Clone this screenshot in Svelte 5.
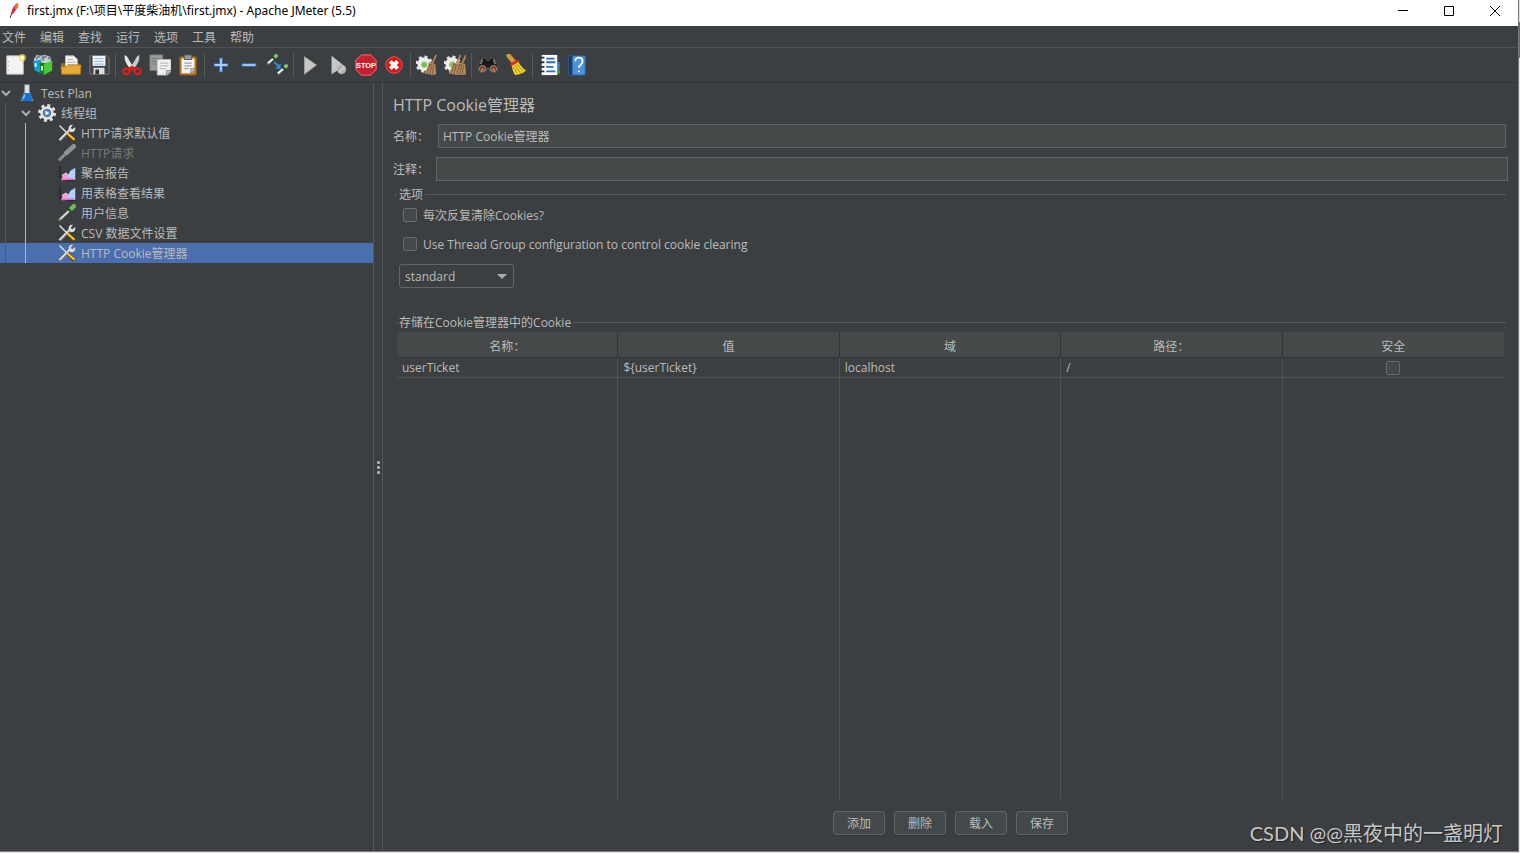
<script lang="ts">
    type TreeNode = {
        label: string;
        icon: string;
        depth: number;
        open?: boolean;
        disabled?: boolean;
    };

    type Cookie = {
        name: string;
        value: string;
        domain: string;
        path: string;
        secure: boolean;
    };

    const menus = ["文件", "编辑", "查找", "运行", "选项", "工具", "帮助"];

    // Toolbar buttons, one array per separated group.
    const toolbar = [
        [
            ["new", "新建"],
            ["templates", "模板"],
            ["open", "打开"],
            ["save", "保存"],
        ],
        [
            ["cut", "剪切"],
            ["copy", "复制"],
            ["paste", "粘贴"],
        ],
        [
            ["plus", "展开"],
            ["minus", "折叠"],
            ["toggle", "切换"],
        ],
        [
            ["start", "启动"],
            ["startNoTimers", "不停顿开始"],
            ["stop", "停止"],
            ["shutdown", "关闭"],
        ],
        [
            ["clear", "清除"],
            ["clearAll", "清除全部"],
        ],
        [
            ["search", "查找"],
            ["searchReset", "重置搜索"],
        ],
        [
            ["functions", "函数助手"],
            ["help", "帮助"],
        ],
    ];

    const nodes: TreeNode[] = [
        { label: "Test Plan", icon: "flask", depth: 0, open: true },
        { label: "线程组", icon: "gear", depth: 1, open: true },
        { label: "HTTP请求默认值", icon: "config", depth: 2 },
        { label: "HTTP请求", icon: "samplerOff", depth: 2, disabled: true },
        { label: "聚合报告", icon: "report", depth: 2 },
        { label: "用表格查看结果", icon: "report", depth: 2 },
        { label: "用户信息", icon: "sampler", depth: 2 },
        { label: "CSV 数据文件设置", icon: "config", depth: 2 },
        { label: "HTTP Cookie管理器", icon: "config", depth: 2 },
    ];

    const columns = ["名称：", "值", "域", "路径：", "安全"];

    let selected = $state(8);
    let name = $state("HTTP Cookie管理器");
    let comment = $state("");
    let clearEachIteration = $state(false);
    let useThreadGroup = $state(false);
    let policy = $state("standard");
    let cookies = $state<Cookie[]>([
        {
            name: "userTicket",
            value: "${userTicket}",
            domain: "localhost",
            path: "/",
            secure: false,
        },
    ]);

    function addCookie() {
        cookies.push({ name: "", value: "", domain: "", path: "", secure: false });
    }

    function deleteCookie() {
        cookies.pop();
    }
</script>

{#snippet broom(x: number)}
    <g transform="translate({x} 0)">
        <path d="M19 1 15 10" stroke="#b08055" stroke-width="2" />
        <path d="m11 9 7 2 1 11-4 1-9-2q4-5 5-12z" fill="#b58d63" />
        <path d="m12 12-3 9m5-8-2 9m4-8-1 8M11 11l6 2" stroke="#765334" />
    </g>
{/snippet}

{#snippet cog()}
    <circle cx="9" cy="11" r="8" stroke="#dedede" stroke-width="3" stroke-dasharray="3.2 3.083" />
    <circle cx="9" cy="11" r="5.500" fill="#c8d2c4" stroke="#ededed" stroke-width="4" />
    <circle cx="9" cy="12" r="3" fill="#72c845" />
{/snippet}

{#snippet pipette(x: number, y: number)}
    <g transform="translate({x} {y})">
        <path d="m1 10 6-6" stroke="#77786f" stroke-width="3" />
        <path d="m1 9 6-5" stroke="#f4f4ec" stroke-width="2" />
        <path d="m8 3 2-2" stroke="#7fc766" stroke-width="4" stroke-linecap="round" />
        <path d="m5 1 5 5" stroke="#234027" stroke-width="2" />
    </g>
{/snippet}

{#snippet icon(kind: string, size: number)}
    <svg width={size} height={size} viewBox="0 0 24 24" fill="none" aria-hidden="true">
        {#if kind === "new"}
            <path d="M3 2h18v20H3z" fill="#f3f3f3" stroke="#c9c9c9" />
            <path d="M5 8v1m0 3v1m0 4v1" stroke="#999" />
            <circle cx="20" cy="4" r="4" fill="#f5e04d" opacity=".7" />
            <circle cx="20" cy="4" r="2" fill="#fffbd0" />
        {:else if kind === "templates"}
            <path d="m2 6 3-5 4 1 5-1 3 1 3 1 1 7H3z" fill="#c7d0d3" />
            <path d="M5 6q0-4 4-3m3 4q0-4 4-4m-5 3 1-4m6 4 1-3" stroke="#73868c" stroke-width="2" />
            <path d="m1 8 9-2v15l-7-3z" fill="#169ed3" />
            <path d="m8 9 6 1v13l-5-2z" fill="#078a22" />
            <path d="m13 11 9-4v11l-9 5z" fill="#4acb35" />
            <path d="M4 10v4m7-1v5" stroke="#e7fbff" stroke-width="2" />
        {:else if kind === "open"}
            <path d="M1 10h20v12H2z" fill="#a06e12" />
            <path d="M6 2h9l4 4v10H6z" fill="#f5f5f5" stroke="#bbb" />
            <path d="M8 6h6m-6 3h9m-9 3h9" stroke="#aaa" />
            <path d="M1 14h6l2-2h14l-1 10H2z" fill="#e5ad36" stroke="#b47d16" />
        {:else if kind === "save"}
            <path d="M2 2h19l2 2v18H2z" fill="#444" stroke="#777" />
            <path d="M5 2h14v11H5z" fill="#edf4fa" />
            <path d="M7 5h10M7 8h10m-10 3h10" stroke="#87b2d6" />
            <path d="M6 15h12v7H6z" fill="#ddd" />
            <path d="M8 17h4v5H8z" fill="#333" />
        {:else if kind === "cut"}
            <path d="M4 1q3 1 5 6l5 8-3 2Q3 9 4 1z" fill="#e7e9e9" />
            <path d="M20 1q-3 1-5 6l-5 8 3 2q8-8 7-16z" fill="#c8cccc" />
            <path d="m12 14-4 4m4-4 4 4" stroke="#d31717" stroke-width="3" />
            <ellipse cx="6" cy="19" rx="3.500" ry="3" stroke="#e21b1b" stroke-width="2.500" />
            <ellipse cx="18" cy="19" rx="3.500" ry="3" stroke="#e21b1b" stroke-width="2.500" />
        {:else if kind === "copy"}
            <path d="M1 1h14v17H1z" fill="#9a9c9b" stroke="#777" />
            <path d="M3 5h10M3 8h10M3 11h7" stroke="#737674" />
            <path d="M9 6h15v13l-4 4H9z" fill="#f1f1ef" stroke="#b8b8b4" />
            <path d="M12 10h9m-9 3h9m-9 3h7" stroke="#aaa" />
            <path d="M24 18h-5v5z" fill="#ccc" stroke="#888" />
        {:else if kind === "paste"}
            <rect x="3" y="3" width="18" height="20" rx="1" fill="#bd7b22" stroke="#8c5712" />
            <path d="M5 5h14v13l-3 3H5z" fill="#f2f2f0" />
            <path d="M8 1h8v5H8z" fill="#999" stroke="#555" />
            <path d="M8 10h8m-8 3h8m-8 3h5" stroke="#888" />
            <path d="M20 16h-5v5z" fill="#ccc" stroke="#888" />
        {:else if kind === "plus"}
            <path d="M12 4v16M4 12h16" stroke="#3973b8" stroke-width="4" />
            <path d="M12 5v14M5 12h14" stroke="#a9ccf2" stroke-width="2" />
        {:else if kind === "minus"}
            <path d="M4 12h16" stroke="#3973b8" stroke-width="4" />
            <path d="M5 12h14" stroke="#a9ccf2" stroke-width="2" />
        {:else if kind === "toggle"}
            {@render pipette(1, 1)}
            {@render pipette(12, 12)}
            <path d="m9 9 6 5" stroke="#318ce7" stroke-width="2" />
            <path d="M16 10v6h-6z" fill="#318ce7" />
        {:else if kind === "start"}
            <path d="m6 3 13 9-13 10z" fill="#c7c7c7" stroke="#a2a2a2" />
        {:else if kind === "startNoTimers"}
            <path d="m5 2 14 11-14 9z" fill="#c7c7c7" />
            <circle cx="16" cy="17" r="5" fill="#b0b0b0" />
            <path d="m13 20 6-6" stroke="#d2d2d2" stroke-width="2" />
        {:else if kind === "stop"}
            <path d="M7 0h10l7 7v10l-7 7H7l-7-7V7z" fill="#c51f30" />
            <path d="M7 1h10l6 6v10l-6 6H7l-6-6V7z" stroke="#df7680" />
            <text x="12" y="15" text-anchor="middle" class="stop-text">STOP</text>
        {:else if kind === "shutdown"}
            <circle cx="12" cy="12" r="9" fill="#d81818" stroke="#ed5a50" />
            <path d="m8 8 8 8m0-8-8 8" stroke="#fff" stroke-width="4" />
        {:else if kind === "clear"}
            {@render cog()}
            {@render broom(3)}
        {:else if kind === "clearAll"}
            {@render cog()}
            {@render broom(-1)}
            {@render broom(5)}
        {:else if kind === "search"}
            <path d="m1 14 4-9 4-1 2 3h2l2-3 4 1 4 9-1 6h-7l-2-5h-2l-2 5H2z" fill="#191919" stroke="#555" />
            <path d="M6 6 4 11m14-5 2 5" stroke="#777" stroke-width="2" />
            <circle cx="6" cy="16" r="3.500" fill="#7b3d26" stroke="#999" />
            <circle cx="18" cy="16" r="3.500" fill="#7b3d26" stroke="#999" />
            <circle cx="6" cy="17" r="1.500" fill="#cd7244" />
            <circle cx="18" cy="17" r="1.500" fill="#cd7244" />
        {:else if kind === "searchReset"}
            <path d="m4 2 6 7" stroke="#d79a31" stroke-width="5" stroke-linecap="round" />
            <path d="m7 11 7-4q3 7 9 11-4 4-12 5Q8 19 7 11z" fill="#f1d12b" />
            <path d="m9 14 4 7m-2-9 6 9m-4-10 7 8" stroke="#b48a00" />
            <path d="m6 12 9-5" stroke="#d52a2a" stroke-width="3" />
        {:else if kind === "functions"}
            <path d="M18 9h6v7h-6z" fill="#2c71d2" />
            <path d="M18 16h6v6h-6z" fill="#29952e" />
            <path d="M4 1h17v22H4z" fill="#fff" />
            <path d="M2 4h5M2 9h5m-5 5h5m-5 5h5" stroke="#333" stroke-width="2" />
            <path d="M9 5h9M9 9h10M9 14h8m-8 5h10" stroke="#2b6ac1" stroke-width="2" />
        {:else if kind === "help"}
            <path d="M3 2h18v21H3z" fill="#4a91df" stroke="#2c5e9f" />
            <path d="M3 2h4v21H3z" fill="#183d69" />
            <path d="M10 8q0-4 4-4t4 4q0 2-2 4-2 1-2 3m0 3v2" stroke="#fff" stroke-width="2" />
        {:else if kind === "flask"}
            <path d="M9 1h6v9l5 12H4l5-12z" fill="#d9e5ef" stroke="#8b9aa8" />
            <path d="m8 12 8 0 4 9q-8 4-16 0z" fill="#1474d4" />
            <path d="m9 14-2 6" stroke="#84c5ff" stroke-width="2" />
        {:else if kind === "gear"}
            <circle cx="12" cy="12" r="10" stroke="#e2e2e2" stroke-width="4" stroke-dasharray="4 3.854" />
            <circle cx="12" cy="12" r="7" fill="#5f87be" stroke="#e5e5e5" stroke-width="4" />
            <circle cx="12" cy="12" r="5" stroke="#315485" />
            <path d="m10 9 5 3-5 3z" fill="#fff" />
        {:else if kind === "config"}
            <path d="m2 22 14-14" stroke="#85857e" stroke-width="4" />
            <path d="m2 21 14-14" stroke="#eee" stroke-width="2" />
            <path d="M20 1q-6-1-6 6l3 4q7 0 6-7l-4 3-2-2z" fill="#ddd" />
            <path d="m2 2 11 11" stroke="#ddd" stroke-width="2" />
            <path d="m13 13 9 9" stroke="#5b4300" stroke-width="5" />
            <path d="m13 13 9 8" stroke="#ffc52b" stroke-width="3" />
        {:else if kind === "samplerOff"}
            <path d="m1 22 13-13" stroke="#8c8c8c" stroke-width="4" />
            <path d="m11 12 10-9" stroke="#929292" stroke-width="6" stroke-linecap="round" />
        {:else if kind === "sampler"}
            <path d="m1 22 14-13" stroke="#77786f" stroke-width="4" />
            <path d="m3 20 12-11" stroke="#f0f0e8" stroke-width="2" />
            <path d="m17 7 4-4" stroke="#6cb85d" stroke-width="6" stroke-linecap="round" />
            <path d="m12 5 7 7" stroke="#27512a" stroke-width="3" />
        {:else if kind === "report"}
            <path d="M3 2v20h20M1 5h2M1 9h2M1 13h2M1 17h2" stroke="#222" />
            <path d="m5 21 1-6 5-3 4 4 3 5z" fill="#f29de0" />
            <path d="M14 18q-1-6 4-10l5-3v16h-7z" fill="#b2d2fa" />
            <path d="m4 21 17-1" stroke="#e36fd0" stroke-width="2" />
            <path d="m5 15 6-3 4 4" stroke="#fff" />
        {/if}
    </svg>
{/snippet}

<div class="desktop">
    <div class="window">
        <header class="titlebar">
            <svg class="feather" width="14" height="18" viewBox="0 0 14 18" aria-hidden="true">
                <path d="M11 1q2 1 1 4L7 12H5Q6 5 11 1z" fill="#cf3138" />
                <path d="M11 1q2 1 1 4L9 8V4z" fill="#ed7d31" />
                <path d="m6 11-2 5" stroke="#652276" fill="none" />
            </svg>
            <h1>first.jmx (F:\项目\平度柴油机\first.jmx) - Apache JMeter (5.5)</h1>
            <div class="window-controls">
                <button aria-label="最小化">
                    <svg width="12" height="12"><path d="M1 5.500h10" /></svg>
                </button>
                <button aria-label="最大化">
                    <svg width="12" height="12"><path d="M1.500 1.500h9v9h-9z" /></svg>
                </button>
                <button aria-label="关闭">
                    <svg width="12" height="12"><path d="m1 1 10 10m0-10L1 11" /></svg>
                </button>
            </div>
        </header>

        <nav class="menubar">
            {#each menus as menu}
                <button>{menu}</button>
            {/each}
        </nav>

        <div class="toolbar" role="toolbar">
            {#each toolbar as group, i}
                {#if i > 0}<span class="separator"></span>{/if}
                {#each group as [kind, label]}
                    <button aria-label={label} title={label}>{@render icon(kind, 22)}</button>
                {/each}
            {/each}
        </div>

        <div class="workspace">
            <aside class="tree" role="tree">
                {#each nodes as node, i}
                    <button
                        class="node"
                        class:selected={selected === i}
                        class:disabled={node.disabled}
                        role="treeitem"
                        aria-selected={selected === i}
                        onclick={() => (selected = i)}
                    >
                        {#each { length: node.depth } as _, level}
                            <span class="guide" class:active={level === 1}></span>
                        {/each}
                        <span class="chevron">
                            {#if node.open}
                                <svg width="11" height="8"><path d="m2 2 4 4 4-4" /></svg>
                            {/if}
                        </span>
                        {@render icon(node.icon, 18)}
                        <span class="node-label">{node.label}</span>
                    </button>
                {/each}
            </aside>

            <div class="splitter"><i></i><i></i><i></i></div>

            <main class="editor">
                <h2>HTTP Cookie管理器</h2>
                <div class="field name-field">
                    <label for="name">名称：</label>
                    <input id="name" type="text" bind:value={name} />
                </div>
                <div class="field">
                    <label for="comment">注释：</label>
                    <input id="comment" type="text" bind:value={comment} />
                </div>

                <fieldset class="options">
                    <legend>选项</legend>
                    <label class="check">
                        <input type="checkbox" bind:checked={clearEachIteration} />
                        <span>每次反复清除Cookies?</span>
                    </label>
                    <label class="check">
                        <input type="checkbox" bind:checked={useThreadGroup} />
                        <span>Use Thread Group configuration to control cookie clearing</span>
                    </label>
                    <div class="select">
                        <select aria-label="Cookie policy" bind:value={policy}>
                            <option>standard</option>
                            <option>netscape</option>
                            <option>ignoreCookies</option>
                        </select>
                    </div>
                </fieldset>

                <fieldset class="stored">
                    <legend>存储在Cookie管理器中的Cookie</legend>
                    <div class="table-wrap">
                        <table>
                            <thead>
                                <tr>
                                    {#each columns as column}
                                        <th>{column}</th>
                                    {/each}
                                </tr>
                            </thead>
                            <tbody>
                                {#each cookies as cookie}
                                    <tr class="row">
                                        <td>{cookie.name}</td>
                                        <td>{cookie.value}</td>
                                        <td>{cookie.domain}</td>
                                        <td>{cookie.path}</td>
                                        <td class="secure">
                                            <input type="checkbox" aria-label="安全" bind:checked={cookie.secure} />
                                        </td>
                                    </tr>
                                {/each}
                                <!-- Empty row keeps the column lines running to the bottom. -->
                                <tr>
                                    {#each columns as _}
                                        <td></td>
                                    {/each}
                                </tr>
                            </tbody>
                        </table>
                    </div>
                </fieldset>

                <div class="actions">
                    <button onclick={addCookie}>添加</button>
                    <button onclick={deleteCookie}>删除</button>
                    <button>载入</button>
                    <button>保存</button>
                </div>
            </main>
        </div>
    </div>
    <div class="watermark">CSDN @@黑夜中的一盏明灯</div>
</div>

<style>
    :global(body) {
        margin: 0;
        background: #3c3f41;
    }

    .desktop {
        position: relative;
        box-sizing: border-box;
        min-height: 100vh;
        padding: 0 1px 1px 0;
        display: flex;
        background: linear-gradient(#ddd 22px, #c8452b 22px 58px, #e4e4e8 58px);
        font: 12px/18px "Open Sans", "Noto Sans CJK SC", sans-serif;
        color: #bbb;
    }

    .desktop * {
        box-sizing: border-box;
    }

    .window {
        flex: 1;
        min-width: 0;
        display: flex;
        flex-direction: column;
        background: #3c3f41;
        border: solid #77797a;
        border-width: 0 1px 1px 0;
    }

    button,
    input,
    select {
        font: inherit;
        color: inherit;
        margin: 0;
    }

    button {
        padding: 0;
        border: 0;
        background: none;
    }

    svg {
        flex: none;
        display: block;
    }

    .titlebar {
        height: 26px;
        display: flex;
        align-items: center;
        padding-left: 6px;
        padding-bottom: 4px;
        background: #fff;
        color: #000;
    }

    .titlebar h1 {
        margin: 0 auto 0 7px;
        font: 12px/18px "Noto Sans", "Noto Sans CJK SC", sans-serif;
    }

    .window-controls {
        display: flex;
    }

    .window-controls button {
        width: 46px;
        height: 22px;
        display: flex;
        align-items: center;
        justify-content: center;
    }

    .window-controls path {
        stroke: #000;
        fill: none;
    }

    .menubar {
        height: 22px;
        display: flex;
        gap: 14px;
        padding-left: 2px;
        border-bottom: 1px solid #515151;
    }

    .menubar button {
        height: 21px;
        padding-top: 2px;
    }

    .toolbar {
        height: 35px;
        display: flex;
        align-items: center;
        padding-left: 1px;
        border-bottom: 1px solid #323435;
    }

    .toolbar button {
        width: 28px;
        height: 28px;
        display: flex;
        align-items: center;
        justify-content: center;
    }

    .separator {
        width: 1px;
        height: 25px;
        margin: 0 2px;
        background: #555859;
    }

    .stop-text {
        font: bold 8px "Liberation Sans", sans-serif;
        fill: #fff;
    }

    .workspace {
        flex: 1;
        display: flex;
    }

    .tree {
        width: 373px;
        flex: none;
    }

    .node {
        width: 100%;
        height: 20px;
        display: flex;
        align-items: center;
        text-align: left;
        white-space: nowrap;
    }

    .node.selected {
        background: #4b6eaf;
    }

    .node.disabled {
        color: #777;
    }

    .guide {
        width: 15px;
        height: 20px;
        margin-left: 5px;
        border-left: 1px solid #555859;
    }

    .guide.active {
        border-color: #8ac4ec;
    }

    .chevron {
        width: 18px;
    }

    .chevron path {
        fill: none;
        stroke: #adadad;
        stroke-width: 2;
    }

    .node-label {
        margin-left: 5px;
        padding-top: 2px;
    }

    .splitter {
        width: 10px;
        flex: none;
        display: flex;
        flex-direction: column;
        align-items: center;
        justify-content: center;
        gap: 2px;
        border: solid #555859;
        border-width: 0 1px;
    }

    .splitter i {
        width: 3px;
        height: 3px;
        border-radius: 1px;
        background: #adadad;
    }

    .editor {
        flex: 1;
        min-width: 0;
        display: flex;
        flex-direction: column;
        padding: 10px 10px 16px;
    }

    h2 {
        margin: 0 0 7px;
        font-size: 16px;
        line-height: 24px;
        font-weight: 400;
    }

    .field {
        display: flex;
        align-items: center;
        margin-bottom: 9px;
    }

    .field + .field {
        margin-bottom: 4px;
    }

    .field label {
        width: 43px;
        flex: none;
        padding-top: 2px;
    }

    .field input {
        flex: 1;
        min-width: 0;
        height: 24px;
        padding: 0 4px;
        border: 1px solid #646464;
        background: #45494a;
        outline: none;
    }

    .name-field {
        padding-right: 2px;
    }

    .field.name-field label {
        width: 45px;
    }

    fieldset {
        min-width: 0;
        margin: 0 2px;
        padding: 0 2px;
        border: 0;
        border-top: 1px solid #555859;
    }

    legend {
        height: 18px;
        padding: 1px 2px 0;
    }

    .check {
        height: 18px;
        display: flex;
        align-items: center;
        gap: 6px;
        margin: 3px 0 11px 6px;
    }

    .check + .check {
        margin-top: 0;
    }

    .check span {
        padding-top: 2px;
    }

    input[type="checkbox"] {
        appearance: none;
        width: 14px;
        height: 14px;
        border: 1px solid #6b6b6b;
        border-radius: 2px;
        background: #43494a;
    }

    input[type="checkbox"]:checked {
        background: #4b6eaf;
    }

    .select {
        width: 115px;
        display: grid;
        align-items: center;
        margin-left: 2px;
    }

    .select select,
    .select::after {
        grid-area: 1 / 1;
    }

    .select select {
        appearance: none;
        width: 100%;
        height: 24px;
        padding: 2px 5px 0;
        border: 1px solid #646464;
        border-radius: 3px;
        background: #3c3f41;
    }

    .select::after {
        content: "";
        justify-self: end;
        margin-right: 7px;
        border: solid transparent;
        border-width: 5px 5px 0;
        border-top-color: #adadad;
        pointer-events: none;
    }

    .stored {
        flex: 1;
        display: flex;
        flex-direction: column;
        margin-top: 25px;
    }

    .table-wrap {
        flex: 1;
        display: grid;
        padding-top: 1px;
    }

    table {
        width: 100%;
        height: 100%;
        table-layout: fixed;
        border-collapse: separate;
        border-spacing: 0;
    }

    th {
        height: 26px;
        padding: 4px 0 0;
        font-weight: 400;
        background: #45494a;
        border-right: 1px solid #323435;
        border-bottom: 1px solid #323435;
    }

    td {
        padding: 0 5px;
        border-right: 1px solid #515151;
    }

    th:last-child,
    td:last-child {
        border-right: 0;
    }

    .row td {
        height: 20px;
        border-bottom: 1px solid #515151;
    }

    .secure input {
        display: block;
        margin: 0 auto;
    }

    .actions {
        display: flex;
        justify-content: center;
        gap: 9px;
        margin-top: 12px;
    }

    .actions button {
        width: 52px;
        height: 24px;
        padding-top: 2px;
        border: 1px solid #646464;
        border-radius: 3px;
        background: #43494a;
        box-shadow: 0 1px 1px #323435;
    }

    .watermark {
        position: absolute;
        right: 17px;
        bottom: 6px;
        font: 20px/28px Lato, "Noto Sans CJK SC", sans-serif;
        color: #c8c8c8;
        text-shadow: 1px 1px 1px #222;
        pointer-events: none;
    }
</style>
